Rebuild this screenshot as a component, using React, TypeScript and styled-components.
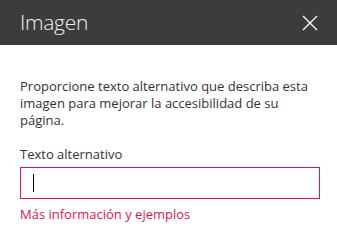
import React from 'react'
import styled, { createGlobalStyle } from 'styled-components'

const GlobalStyle = createGlobalStyle`
    html, body {
        margin: 0;
        padding: 0;
        background: #ffffff;
    }
    body {
        font-family: 'Open Sans', 'Noto Sans', sans-serif;
    }
`

const App = () => {
    return (
        <>
            <GlobalStyle />
            <Panel>
                <Header>
                    <Title>Imagen</Title>
                    <CloseButton aria-label="Cerrar">
                        <svg width="16" height="16" viewBox="0 0 16 16">
                            <path d="M1 1 L15 15 M15 1 L1 15" stroke="#ffffff" strokeWidth="1.3" fill="none" />
                        </svg>
                    </CloseButton>
                </Header>
                <Body>
                    <Description>
                        Proporcione texto alternativo que describa esta imagen para mejorar la accesibilidad de su página.
                    </Description>
                    <Field>
                        <Label>Texto alternativo</Label>
                        <InputBox>
                            <Caret />
                        </InputBox>
                        <HelpLink href="#">Más información y ejemplos</HelpLink>
                    </Field>
                </Body>
            </Panel>
        </>
    )
}

export default App

const Panel = styled.div`
    width: 337px;
    height: 248px;
    background: #ffffff;
    display: flex;
    flex-direction: column;
`

const Header = styled.div`
    height: 45px;
    background: #3c3c3c;
    display: flex;
    align-items: center;
    justify-content: space-between;
    padding: 0 19px 0 20px;
    box-sizing: border-box;
`

const Title = styled.h1`
    margin: 0;
    font-family: 'Open Sans', sans-serif;
    font-weight: 300;
    font-size: 21px;
    color: #f0f0f0;
    letter-spacing: -0.3px;
    padding-bottom: 2px;
`

const CloseButton = styled.button`
    background: none;
    border: none;
    padding: 0;
    width: 16px;
    height: 16px;
    display: flex;
    cursor: pointer;
`

const Body = styled.div`
    padding: 33px 17px 0 20px;
    display: flex;
    flex-direction: column;
    gap: 17px;
`

const Description = styled.p`
    margin: 0;
    font-size: 13px;
    line-height: 17px;
    color: #333333;
`

const Field = styled.div`
    display: flex;
    flex-direction: column;
`

const Label = styled.label`
    font-size: 13px;
    line-height: 17px;
    color: #333333;
    margin-bottom: 4px;
`

const InputBox = styled.div`
    height: 32px;
    border: 1px solid #e3134f;
    box-sizing: border-box;
    display: flex;
    align-items: center;
    padding-left: 12px;
`

const Caret = styled.span`
    width: 1px;
    height: 18px;
    background: #000000;
`

const HelpLink = styled.a`
    margin-top: 7px;
    font-size: 13px;
    line-height: 17px;
    color: #e3134f;
    text-decoration: none;
`
